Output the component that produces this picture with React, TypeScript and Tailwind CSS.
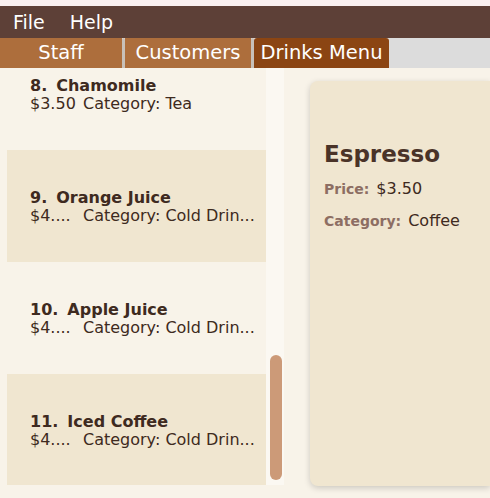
import React from "react";

const drinks = [
  { no: "8.", name: "Chamomile", price: "$3.50", category: "Category: Tea" },
  { no: "9.", name: "Orange Juice", price: "$4....", category: "Category: Cold Drin..." },
  { no: "10.", name: "Apple Juice", price: "$4....", category: "Category: Cold Drin..." },
  { no: "11.", name: "Iced Coffee", price: "$4....", category: "Category: Cold Drin..." },
];

function DrinkCell({ d, odd }: { d: (typeof drinks)[number]; odd: boolean }) {
  return (
    <div
      className={
        "h-[112px] shrink-0 flex flex-col justify-center pl-[23px] pr-2 " +
        (odd ? "bg-[#f0e6d0]" : "bg-[#f8f3e9]")
      }
    >
      <div className="flex items-baseline gap-[9px] text-[16px] font-bold leading-[19px] text-[#3e2a20]">
        <span>{d.no}</span>
        <span>{d.name}</span>
      </div>
      <div className="flex items-baseline text-[16px] leading-[18px] text-[#3e2a20] whitespace-nowrap">
        <span className="min-w-[53px]">{d.price}</span>
        <span>{d.category}</span>
      </div>
    </div>
  );
}

export default function App() {
  return (
    <div
      className="w-[490px] h-[498px] flex flex-col bg-[#f8f3e9] overflow-hidden"
      style={{ fontFamily: '"DejaVu Sans", "Open Sans", sans-serif' }}
    >
      <div className="h-[6px] bg-[#f9f0f0]" />
      <div className="h-[32px] bg-[#5d4037] flex items-center gap-[25px] px-[13px] pt-[1px] text-[19px] text-white">
        <span>File</span>
        <span>Help</span>
      </div>
      <div className="h-[30px] bg-[#dcdcdc] flex text-[19.5px] text-white relative z-10">
        <div className="w-[122px] bg-[#ad6e3c] flex items-center justify-center">Staff</div>
        <div className="w-[3px] bg-[#c8c0b8] rounded-t-sm" />
        <div className="w-[126px] bg-[#ad6e3c] flex items-center justify-center">Customers</div>
        <div className="w-[3px] bg-[#c8c0b8] rounded-t-sm" />
        <div className="w-[135px] bg-[#8b4513] rounded-t-[3px] flex items-center justify-center">
          Drinks Menu
        </div>
      </div>

      <div className="flex-1 flex min-h-0 overflow-hidden">
        <div className="w-[284px] pl-[7px] flex h-[417px] overflow-hidden">
          <div className="w-[259px] flex flex-col -mt-[30px] overflow-hidden">
            {drinks.map((d, i) => (
              <DrinkCell key={d.no} d={d} odd={i % 2 === 1} />
            ))}
          </div>
          <div className="w-[18px] bg-[#fbf8f2] pt-[287px] pl-[4px]">
            <div className="w-[12px] h-[125px] rounded-[6px] bg-[#cc9a78]" />
          </div>
        </div>

        <div className="flex-1 pl-[26px] pt-[13px] pb-[12px]">
          <div className="h-full bg-[#f0e6d0] rounded-l-[8px] shadow-[0_2px_6px_rgba(0,0,0,0.18)] pl-[14px] pt-[58px]">
            <div className="text-[23px] font-bold leading-[30px] text-[#4a3328]">Espresso</div>
            <div className="mt-[10px] flex items-baseline gap-[7px] leading-[20px]">
              <span className="text-[14px] font-bold text-[#8d6e63]">Price:</span>
              <span className="text-[16px] text-[#3e2a20]">$3.50</span>
            </div>
            <div className="mt-[12px] flex items-baseline gap-[7px] leading-[20px]">
              <span className="text-[14px] font-bold text-[#8d6e63]">Category:</span>
              <span className="text-[16px] text-[#3e2a20]">Coffee</span>
            </div>
          </div>
        </div>
      </div>
    </div>
  );
}
